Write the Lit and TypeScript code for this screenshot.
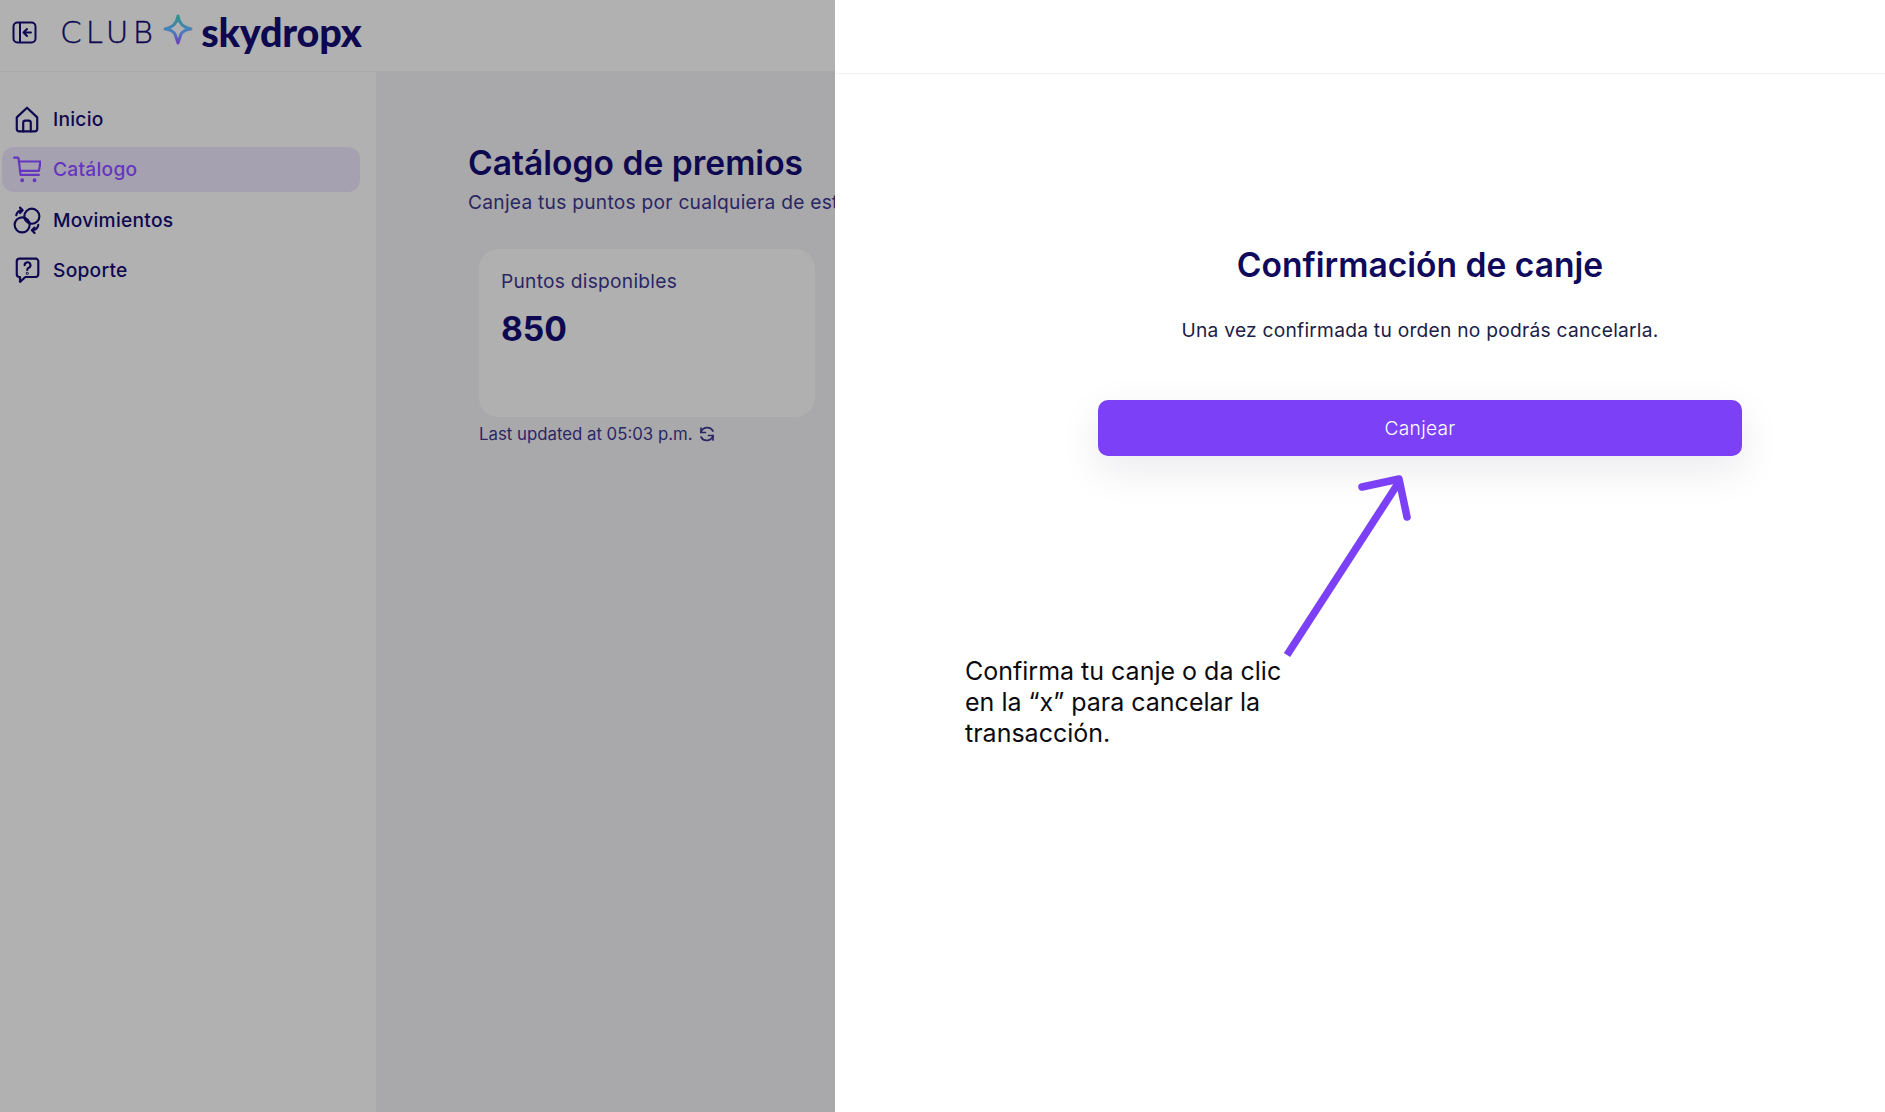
import { LitElement, html, css, svg } from 'lit';
import { customElement } from 'lit/decorators.js';

const NAV = [
  {
    label: 'Inicio',
    icon: svg`<path d="M3.500 11.500 13 2.500l9.500 9V22a2.500 2.500 0 0 1-2.500 2.500H6A2.500 2.500 0 0 1 3.500 22z"/><path d="M9.500 24.500V16.500a2 2 0 0 1 2-2h3a2 2 0 0 1 2 2v8"/>`,
  },
  {
    label: 'Catálogo',
    active: true,
    icon: svg`<path d="M1 2.500h3.200a1 1 0 0 1 1 .9L7 18.500h17"/><path d="M5.400 6H25.500l-1.400 8.700H6.400"/><circle cx="8.500" cy="23.500" r=".8"/><circle cx="20" cy="23.500" r=".8"/>`,
  },
  {
    label: 'Movimientos',
    icon: svg`<circle cx="17.500" cy="9.500" r="7"/><circle cx="8.500" cy="17.500" r="7"/><path d="M3 8.500a6 6 0 0 1 5-4.500"/><path d="M6.500 1.500 9 4 6.500 6.500"/><path d="M23.500 17.500a6 6 0 0 1-5 5"/><path d="M20 25l-2.500-2.500L20 20"/>`,
  },
  {
    label: 'Soporte',
    icon: svg`<path d="M6 2.500h15a2.500 2.500 0 0 1 2.500 2.500V17a2.500 2.500 0 0 1-2.500 2.500H11.500L6.500 24v-4.500H6A2.500 2.500 0 0 1 3.500 17V5A2.500 2.500 0 0 1 6 2.500z"/><path d="M10.800 8.500a2.700 2.700 0 1 1 3.800 2.500c-1 .4-1.400 1-1.400 2"/><circle cx="13.200" cy="16" r=".4"/>`,
  },
];

@customElement('app-root')
export class AppRoot extends LitElement {
  static styles = css`
    :host {
      display: grid;
      grid-template-columns: 835px 1fr;
      height: 100vh;
      position: relative;
      overflow: hidden;
      font-family: Inter, 'Liberation Sans', sans-serif;
      font-optical-sizing: none;
      color: #0e0850;
      background: #fff;
    }

    .backdrop {
      display: flex;
      flex-direction: column;
      min-width: 0;
      overflow: hidden;
      background: #a9a9ab;
    }

    .topbar {
      display: flex;
      align-items: center;
      height: 72px;
      flex: none;
      padding: 0 0 7px 12px;
      box-sizing: border-box;
      background: #b1b1b1;
      border-bottom: 1px solid #aaaaaa;
    }

    .toggle {
      width: 25px;
      height: 23px;
      flex: none;
      fill: none;
      stroke: #0e0850;
      stroke-width: 2;
    }

    .club {
      margin-left: 23px;
      font-family: 'DejaVu Sans', Inter, sans-serif;
      font-size: 31px;
      font-weight: 200;
      letter-spacing: 4.200px;
      line-height: 1;
      color: #0e0850;
      -webkit-text-stroke: 0.4px #0e0850;
    }

    .star {
      width: 30px;
      height: 32px;
      margin: -5px 8px 0 6px;
      flex: none;
    }

    .brand {
      font-family: Lato, sans-serif;
      font-size: 39.500px;
      font-weight: 900;
      letter-spacing: -0.2px;
      line-height: 1;
      color: #0e0850;
    }

    .body {
      display: flex;
      flex: 1;
      min-height: 0;
    }

    .sidebar {
      display: flex;
      flex-direction: column;
      gap: 5.500px;
      width: 376px;
      flex: none;
      box-sizing: border-box;
      padding: 24px 16px 0 2px;
      background: #b1b1b1;
    }

    .nav-item {
      display: flex;
      align-items: center;
      gap: 12px;
      height: 45px;
      padding-left: 11px;
      border-radius: 12px;
      font-size: 19.200px;
      letter-spacing: 0.250px;
      font-weight: 500;
    }

    .nav-item svg {
      width: 28px;
      height: 28px;
      flex: none;
      fill: none;
      stroke: currentColor;
      stroke-width: 2;
      stroke-linecap: round;
      stroke-linejoin: round;
    }

    .nav-item.active {
      background: #a6a1b0;
      color: #6536bd;
    }

    .main {
      flex: 1;
      min-width: 0;
      padding: 0 0 0 92px;
    }

    h1 {
      margin: 72px 0 0;
      font-size: 33.600px;
      line-height: 38px;
      font-weight: 600;
      white-space: nowrap;
    }

    .lead {
      margin: 6px 0 0;
      font-size: 19.200px;
      letter-spacing: 0.250px;
      line-height: 28px;
      color: #2b2664;
      white-space: nowrap;
    }

    .card {
      width: 336px;
      height: 168px;
      box-sizing: border-box;
      margin: 33px 0 0 11px;
      padding: 18px 22px;
      border-radius: 20px;
      background: #b0b0b0;
    }

    .card-label {
      font-size: 19.200px;
      letter-spacing: 0.250px;
      line-height: 28px;
      color: #2b2664;
    }

    .card-value {
      margin-top: 13px;
      font-size: 33.600px;
      line-height: 42px;
      font-weight: 700;
    }

    .updated {
      display: flex;
      align-items: center;
      gap: 5px;
      margin: 6px 0 0 11px;
      font-size: 16.800px;
      line-height: 22px;
      color: #2b2664;
      white-space: nowrap;
    }

    .updated svg {
      width: 18px;
      height: 18px;
      fill: none;
      stroke: currentColor;
      stroke-width: 1.700;
      stroke-linecap: round;
      stroke-linejoin: round;
    }

    .panel {
      display: flex;
      flex-direction: column;
      background: #fff;
    }

    .panel-head {
      height: 73px;
      flex: none;
      border-bottom: 1px solid #f3f3f4;
    }

    .panel-body {
      display: flex;
      flex-direction: column;
      align-items: center;
      padding: 169px 143px 0 263px;
    }

    h2 {
      margin: 0;
      font-size: 33.600px;
      line-height: 44px;
      font-weight: 600;
      color: #0f0a5c;
    }

    .note {
      margin: 29px 0 0;
      font-size: 19.200px;
      letter-spacing: 0.250px;
      line-height: 28px;
      color: #1c2045;
    }

    .confirm {
      width: 100%;
      height: 56px;
      margin-top: 56px;
      border: 0;
      border-radius: 10px;
      background: #7c41f6;
      color: #fff;
      font: 300 19.200px Inter, sans-serif;
      font-optical-sizing: none;
      letter-spacing: 0.250px;
      box-shadow: 0 14px 42px rgba(20, 10, 60, 0.09);
    }

    .arrow {
      position: absolute;
      left: 1270px;
      top: 460px;
      width: 160px;
      height: 210px;
      fill: none;
      stroke: #7c41f6;
      stroke-width: 7.500;
    }

    .callout {
      position: absolute;
      left: 965px;
      top: 656px;
      margin: 0;
      width: 340px;
      font-size: 25px;
      line-height: 31px;
      color: #0b0b0f;
    }
  `;

  render() {
    return html`
      <div class="backdrop">
        <header class="topbar">
          <svg class="toggle" viewBox="0 0 25 23">
            <rect x="1.500" y="1.500" width="22" height="20" rx="4" />
            <path d="M8 1.500v20" />
            <path d="M19 11.500h-7M15 8l-3.500 3.500L15 15" stroke-linecap="round" stroke-linejoin="round" />
          </svg>
          <span class="club">CLUB</span>
          <svg class="star" viewBox="0 0 30 32">
            <defs>
              <linearGradient id="sg2" x1="0" y1="0" x2="0" y2="1">
                <stop offset="0" stop-color="#2f9488" />
                <stop offset="0.55" stop-color="#4a7fc0" />
                <stop offset="1" stop-color="#6a44b8" />
              </linearGradient>
            </defs>
            <path
              d="M15 2c1 7 5 11.500 13 13-4 .5-8 1.500-10 5l-3 9-3-9c-2-3.500-6-4.500-10-5 8-1.500 12-6 13-13z"
              fill="none"
              stroke="url(#sg2)"
              stroke-width="3"
              stroke-linejoin="round"
            />
          </svg>
          <span class="brand">skydropx</span>
        </header>
        <div class="body">
          <nav class="sidebar">
            ${NAV.map(
              (item) => html`
                <div class="nav-item ${item.active ? 'active' : ''}">
                  <svg viewBox="0 0 26 26">${item.icon}</svg>
                  ${item.label}
                </div>
              `
            )}
          </nav>
          <main class="main">
            <h1>Catálogo de premios</h1>
            <p class="lead">Canjea tus puntos por cualquiera de estos premios</p>
            <div class="card">
              <div class="card-label">Puntos disponibles</div>
              <div class="card-value">850</div>
            </div>
            <div class="updated">
              Last updated at 05:03 p.m.
              <svg viewBox="0 0 18 18">
                <path d="M3 7.500A6.500 6.500 0 0 1 15 6" />
                <path d="M15 10.500A6.500 6.500 0 0 1 3 12" />
                <path d="M3 3v4.500h4.500" />
                <path d="M15 15v-4.500h-4.500" />
              </svg>
            </div>
          </main>
        </div>
      </div>
      <section class="panel">
        <div class="panel-head"></div>
        <div class="panel-body">
          <h2>Confirmación de canje</h2>
          <p class="note">Una vez confirmada tu orden no podrás cancelarla.</p>
          <button class="confirm">Canjear</button>
        </div>
      </section>
      <svg class="arrow" viewBox="0 0 160 210">
        <path d="M17 195 129 22" />
        <path d="M92 27 129 19 137 57" stroke-linecap="round" stroke-linejoin="round" />
      </svg>
      <p class="callout">Confirma tu canje o da clic en la “x” para cancelar la transacción.</p>
    `;
  }
}
